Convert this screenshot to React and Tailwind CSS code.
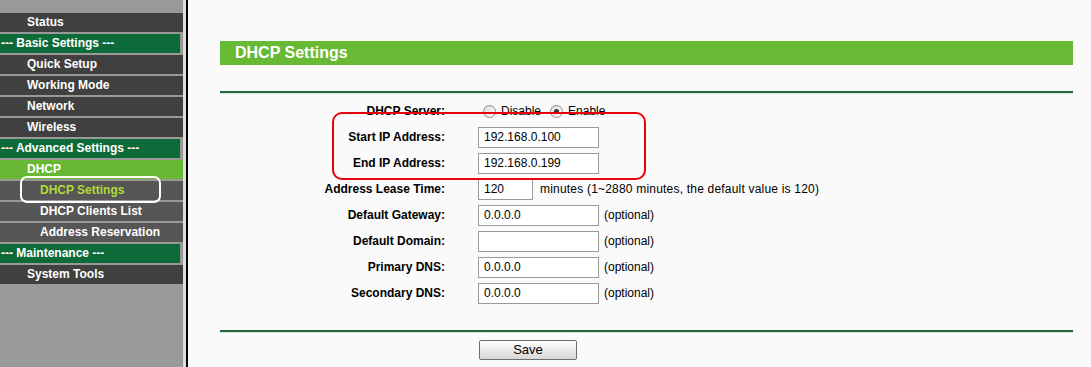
import React from 'react';

const menu = [
  { label: 'Status', kind: 'item' },
  { label: '--- Basic Settings ---', kind: 'head' },
  { label: 'Quick Setup', kind: 'item' },
  { label: 'Working Mode', kind: 'item' },
  { label: 'Network', kind: 'item' },
  { label: 'Wireless', kind: 'item' },
  { label: '--- Advanced Settings ---', kind: 'head' },
  { label: 'DHCP', kind: 'open' },
  { label: 'DHCP Settings', kind: 'active' },
  { label: 'DHCP Clients List', kind: 'sub' },
  { label: 'Address Reservation', kind: 'sub' },
  { label: '--- Maintenance ---', kind: 'head' },
  { label: 'System Tools', kind: 'item' },
];

function MenuRow({ label, kind }) {
  if (kind === 'head') {
    return <div className="h-[19px] mr-[3px] bg-[#0d6b39] pl-[1px] leading-[19px] text-white">{label}</div>;
  }
  if (kind === 'open') {
    return <div className="h-[19px] bg-[#69b833] pl-[27px] leading-[19px] text-white">{label}</div>;
  }
  if (kind === 'active') {
    return (
      <div className="relative h-[19px] bg-[#565656] pl-[40px] leading-[19px] text-[#b0d93a]">
        {label}
        {/* highlight ring */}
        <div className="absolute left-[20px] top-[-5px] h-[27px] w-[141px] rounded-[7px] border-2 border-white" />
      </div>
    );
  }
  if (kind === 'sub') {
    return <div className="h-[19px] bg-[#565656] pl-[40px] leading-[19px] text-white">{label}</div>;
  }
  return <div className="h-[19px] bg-[#404040] pl-[27px] leading-[19px] text-white">{label}</div>;
}

function Radio({ checked }) {
  return (
    <span className="inline-flex h-[13px] w-[13px] items-center justify-center rounded-full border border-[#8a8a8a] bg-gradient-to-br from-[#dcdcdc] to-white">
      {checked && <span className="h-[5px] w-[5px] rounded-full bg-[#333]" />}
    </span>
  );
}

function Field({ label, children }) {
  return (
    <div className="flex h-[26px] items-center">
      <div className="w-[225px] text-right font-bold">{label}</div>
      <div className="ml-[33px] flex items-center">{children}</div>
    </div>
  );
}

function TextBox({ value, w = 'w-[121px]' }) {
  return (
    <div className={`${w} h-[21px] border border-[#9a9a9a] bg-white pl-[5px] leading-[19px]`}>{value}</div>
  );
}

export default function App() {
  return (
    <div
      className="flex h-[367px] w-[1091px] overflow-hidden text-[12px] text-black"
      style={{ fontFamily: '"Liberation Sans", Arial, sans-serif' }}
    >
      {/* Sidebar */}
      <aside className="flex w-[183px] flex-col gap-[2px] bg-[#999999] pt-[13px] font-bold">
        {menu.map((m) => (
          <MenuRow key={m.label} {...m} />
        ))}
      </aside>
      <div className="w-[3px] bg-[#dcdcdc]" />
      <div className="w-[2px] bg-black" />

      {/* Main content */}
      <main className="flex-1 bg-[#fafafa] pl-[32px] pr-[18px] pt-[41px]">
        <div className="h-[24px] bg-[#68b934] pl-[15px] text-[16px] font-bold leading-[24px] text-white">DHCP Settings</div>
        <div className="mt-[26px] h-[2px] bg-[#24693c]" />
        <div className="h-px bg-[#d8e4dc]" />

        <div className="relative mt-[4px]">
          <Field label="DHCP Server:">
            <div className="flex items-center gap-[5px] pl-[5px]">
              <Radio />
              <span className="mr-[4px]">Disable</span>
              <Radio checked />
              <span>Enable</span>
            </div>
          </Field>
          <Field label="Start IP Address:">
            <TextBox value="192.168.0.100" />
          </Field>
          <Field label="End IP Address:">
            <TextBox value="192.168.0.199" />
          </Field>
          <Field label="Address Lease Time:">
            <TextBox value="120" w="w-[55px]" />
            <span className="ml-[7px] tracking-[0.2px]">minutes (1~2880 minutes, the default value is 120)</span>
          </Field>
          <Field label="Default Gateway:">
            <TextBox value="0.0.0.0" />
            <span className="ml-[5px]">(optional)</span>
          </Field>
          <Field label="Default Domain:">
            <TextBox value="" />
            <span className="ml-[5px]">(optional)</span>
          </Field>
          <Field label="Primary DNS:">
            <TextBox value="0.0.0.0" />
            <span className="ml-[5px]">(optional)</span>
          </Field>
          <Field label="Secondary DNS:">
            <TextBox value="0.0.0.0" />
            <span className="ml-[5px]">(optional)</span>
          </Field>

          {/* red annotation box */}
          <div className="absolute left-[112px] top-[14px] h-[68px] w-[314px] rounded-[10px] border-2 border-[#e8000b]" />
        </div>

        <div className="mt-[24px] h-[2px] bg-[#24693c]" />
        <div className="h-px bg-[#d8e4dc]" />

        <div className="mt-[7px] pl-[259px]">
          <button className="h-[20px] w-[98px] rounded-[2px] border border-[#6f6f6f] bg-gradient-to-b from-white to-[#d8d8d8] text-[13px] leading-[18px]">
            Save
          </button>
        </div>
      </main>
    </div>
  );
}
